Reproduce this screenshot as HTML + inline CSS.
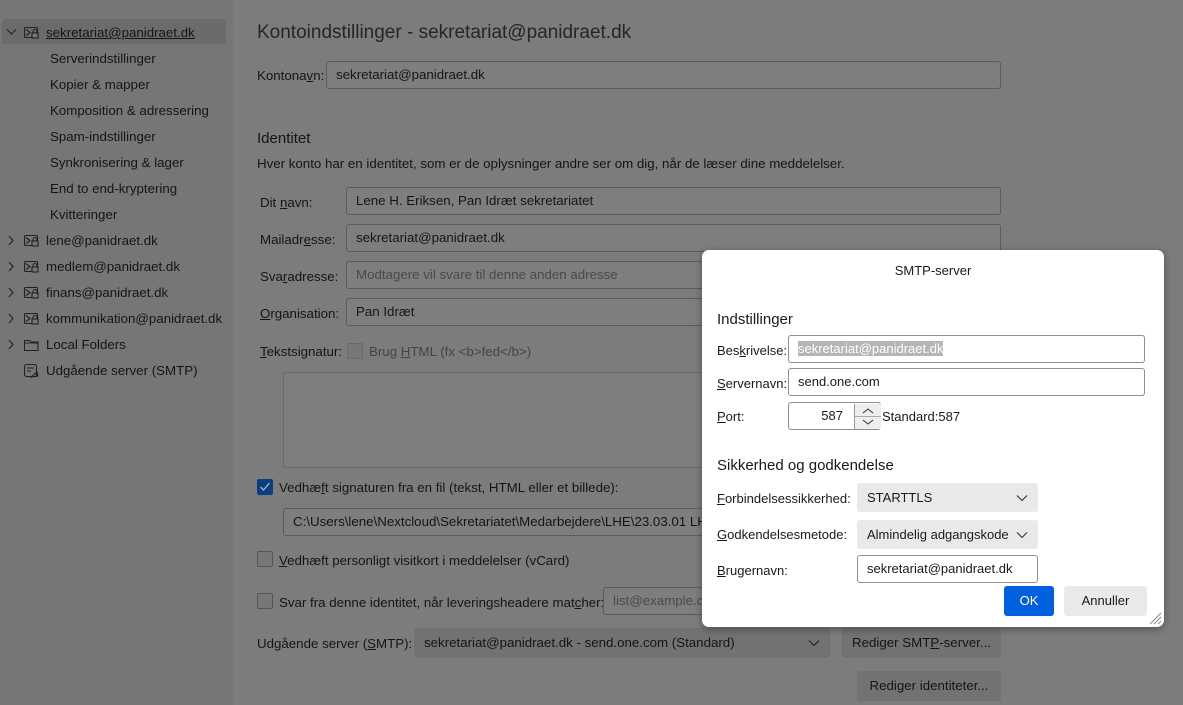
<!DOCTYPE html>
<html><head><meta charset="utf-8">
<style>
*{box-sizing:border-box;margin:0;padding:0}
body{width:1183px;height:705px;overflow:hidden;background:#7c7c7c;font-family:"Liberation Sans",sans-serif;font-size:13.3px;color:#151515;position:relative}
.a{position:absolute;white-space:nowrap}
#side{position:absolute;left:0;top:0;width:233px;height:705px;background:#767676}
.sel{position:absolute;left:2px;top:19px;width:224px;height:25px;background:#6b6b6b;border-radius:3px}
.inp{position:absolute;border:1px solid #5c5c5c;border-radius:3px;background:#7e7e7e;padding-left:9px;line-height:26px;height:28px;white-space:nowrap;overflow:hidden}
.btn{position:absolute;background:#727272;border-radius:3px;text-align:center;line-height:30px;height:30px}
.chk{position:absolute;width:16px;height:16px;border:1px solid #555;border-radius:2px;background:#777}
u{text-decoration:underline}
#dlg{position:absolute;left:702px;top:250px;width:462px;height:377px;background:#fff;border-radius:7px;box-shadow:0 2px 8px rgba(0,0,0,.35);color:#1a1a1a;font-size:13px}
#dlg .inp{background:#fff;border-color:#8f8f8f}
.sb{position:absolute;background:#e9e9eb;border-radius:3px;height:29px;line-height:29px;padding-left:10px}
</style></head><body>
<div id="side">
<div class="sel"></div>
<svg class="a" style="left:6px;top:28px" width="11" height="8" viewBox="0 0 11 8"><path d="M1 1.5l4.5 4.5 4.5-4.5" fill="none" stroke="#222" stroke-width="1.2"/></svg>
<div class="a" style="left:46px;top:25px"><u>sekretariat@panidraet.dk</u></div>
<div class="a" style="left:50px;top:51px">Serverindstillinger</div>
<div class="a" style="left:50px;top:77px">Kopier &amp; mapper</div>
<div class="a" style="left:50px;top:103px">Komposition &amp; adressering</div>
<div class="a" style="left:50px;top:129px">Spam-indstillinger</div>
<div class="a" style="left:50px;top:155px">Synkronisering &amp; lager</div>
<div class="a" style="left:50px;top:181px">End to end-kryptering</div>
<div class="a" style="left:50px;top:207px">Kvitteringer</div>
<div class="a" style="left:46px;top:233px">lene@panidraet.dk</div>
<div class="a" style="left:46px;top:259px">medlem@panidraet.dk</div>
<div class="a" style="left:46px;top:285px">finans@panidraet.dk</div>
<div class="a" style="left:46px;top:311px">kommunikation@panidraet.dk</div>
<div class="a" style="left:46px;top:337px">Local Folders</div>
<div class="a" style="left:46px;top:363px">Udgående server (SMTP)</div>
<svg class="a" style="left:0;top:0" width="46" height="390">
<g fill="none" stroke="#222" stroke-width="1.1">
<path d="M9 236l4 4.5-4 4.5M9 262l4 4.5-4 4.5M9 288l4 4.5-4 4.5M9 314l4 4.5-4 4.5M9 340l4 4.5-4 4.5"/>
<g id="m"><rect x="24.5" y="27.5" width="13" height="10" rx="1"/><path d="M26 29.5l4 3-4 3"/><rect x="32" y="33" width="6" height="5" fill="#767676"/><path d="M33 33v-1.5a2 2 0 014 0V33"/></g>
<use href="#m" y="208"/><use href="#m" y="234"/><use href="#m" y="260"/><use href="#m" y="286"/>
<path d="M24.5 340.5h5l1.5 1.5h7v8.5h-13.5z M24.5 343h13.5"/>
<rect x="24.5" y="364.5" width="12" height="12" rx="2"/><path d="M27 368h7M27 371h4M31 377l6-5 1 4z"/>
</g></svg>
</div>

<div class="a" style="left:257px;top:22px;font-size:19px;color:#262626">Kontoindstillinger - sekretariat@panidraet.dk</div>
<div class="a" style="left:257px;top:68px">Kontona<u>v</u>n:</div>
<div class="inp" style="left:326px;top:61px;width:675px">sekretariat@panidraet.dk</div>
<div class="a" style="left:257px;top:130px;font-size:15px">Identitet</div>
<div class="a" style="left:257px;top:156px">Hver konto har en identitet, som er de oplysninger andre ser om dig, når de læser dine meddelelser.</div>
<div class="a" style="left:260px;top:195px">Dit <u>n</u>avn:</div>
<div class="inp" style="left:346px;top:187px;width:655px">Lene H. Eriksen, Pan Idræt sekretariatet</div>
<div class="a" style="left:260px;top:232px">Mailadr<u>e</u>sse:</div>
<div class="inp" style="left:346px;top:224px;width:655px">sekretariat@panidraet.dk</div>
<div class="a" style="left:260px;top:269px">Sva<u>r</u>adresse:</div>
<div class="inp" style="left:346px;top:261px;width:655px;color:#4a4a4a">Modtagere vil svare til denne anden adresse</div>
<div class="a" style="left:260px;top:306px"><u>O</u>rganisation:</div>
<div class="inp" style="left:346px;top:298px;width:655px">Pan Idræt</div>
<div class="a" style="left:260px;top:344px"><u>T</u>ekstsignatur:</div>
<div class="chk" style="left:347px;top:343px;border-color:#6a6a6a"></div>
<div class="a" style="left:369px;top:344px;color:#444">Brug <u>H</u>TML (fx &lt;b&gt;fed&lt;/b&gt;)</div>
<div class="inp" style="left:283px;top:372px;width:718px;height:96px;border-color:#6a6a6a"></div>
<div class="chk" style="left:257px;top:479px;background:#0b3e80;border-color:#0b3e80"></div>
<svg class="a" style="left:259px;top:481px" width="12" height="12"><path d="M1.5 6l3 3 6-7" fill="none" stroke="#9bb" stroke-width="1.3"/></svg>
<div class="a" style="left:279px;top:480px">Vedhæ<u>f</u>t signaturen fra en fil (tekst, HTML eller et billede):</div>
<div class="inp" style="left:283px;top:508px;width:718px">C:\Users\lene\Nextcloud\Sekretariatet\Medarbejdere\LHE\23.03.01 LHE</div>
<div class="chk" style="left:257px;top:551px"></div>
<div class="a" style="left:279px;top:553px"><u>V</u>edhæft personligt visitkort i meddelelser (vCard)</div>
<div class="chk" style="left:257px;top:593px"></div>
<div class="a" style="left:279px;top:595px">Svar fra denne identitet, når leveringsheadere mat<u>c</u>her:</div>
<div class="inp" style="left:603px;top:587px;width:398px;color:#4a4a4a">list@example.com</div>
<div class="a" style="left:257px;top:636px">Udgående server (<u>S</u>MTP):</div>
<div class="btn" style="left:414px;top:628px;width:416px;text-align:left;padding-left:10px">sekretariat@panidraet.dk - send.one.com (Standard)</div>
<svg class="a" style="left:808px;top:639px" width="12" height="8"><path d="M1 1.5l5 5 5-5" fill="none" stroke="#222" stroke-width="1.1"/></svg>
<div class="btn" style="left:842px;top:628px;width:159px">Rediger SMT<u>P</u>-server...</div>
<div class="btn" style="left:857px;top:671px;width:144px">Rediger identiteter...</div>

<div id="dlg">
<div class="a" style="left:0;width:462px;text-align:center;top:13px">SMTP-server</div>
<div class="a" style="left:15px;top:61px;font-size:15px">Indstillinger</div>
<div class="a" style="left:15px;top:93px">Bes<u>k</u>rivelse:</div>
<div class="inp" style="left:86px;top:85px;width:357px"><span style="background:#b5b5b5;color:#fff">sekretariat@panidraet.dk</span></div>
<div class="a" style="left:15px;top:126px"><u>S</u>ervernavn:</div>
<div class="inp" style="left:86px;top:118px;width:357px">send.one.com</div>
<div class="a" style="left:15px;top:159px"><u>P</u>ort:</div>
<div class="inp" style="left:86px;top:152px;width:93px;text-align:right;padding-right:37px">587</div>
<div class="a" style="left:152px;top:154px;width:27px;height:25px;border-left:1px solid #999;background:#eee"></div>
<svg class="a" style="left:153px;top:154px" width="26" height="25"><path d="M8 9l5-4 5 4M8 16l5 4 5-4" fill="none" stroke="#333" stroke-width="1"/><path d="M0 12.5h26" stroke="#aaa"/></svg>
<div class="a" style="left:180px;top:159px">Standard:587</div>
<div class="a" style="left:15px;top:207px;font-size:15px">Sikkerhed og godkendelse</div>
<div class="a" style="left:15px;top:241px"><u>F</u>orbindelsessikkerhed:</div>
<div class="sb" style="left:155px;top:233px;width:181px">STARTTLS</div>
<div class="a" style="left:15px;top:277px"><u>G</u>odkendelsesmetode:</div>
<div class="sb" style="left:155px;top:270px;width:181px">Almindelig adgangskode</div>
<svg class="a" style="left:314px;top:244px" width="12" height="8"><path d="M1 1.5l5 5 5-5" fill="none" stroke="#333" stroke-width="1.1"/></svg>
<svg class="a" style="left:314px;top:281px" width="12" height="8"><path d="M1 1.5l5 5 5-5" fill="none" stroke="#333" stroke-width="1.1"/></svg>
<div class="a" style="left:15px;top:313px"><u>B</u>rugernavn:</div>
<div class="inp" style="left:155px;top:305px;width:181px">sekretariat@panidraet.dk</div>
<div class="btn" style="left:302px;top:336px;width:50px;background:#0060df;color:#fff">OK</div>
<div class="btn" style="left:362px;top:336px;width:83px;background:#e9e9eb">Annuller</div>
<svg class="a" style="left:446px;top:361px" width="14" height="14"><path d="M2 13L13 2M6 13l7-7M10 13l3-3" stroke="#888"/></svg>
</div>
</body></html>
